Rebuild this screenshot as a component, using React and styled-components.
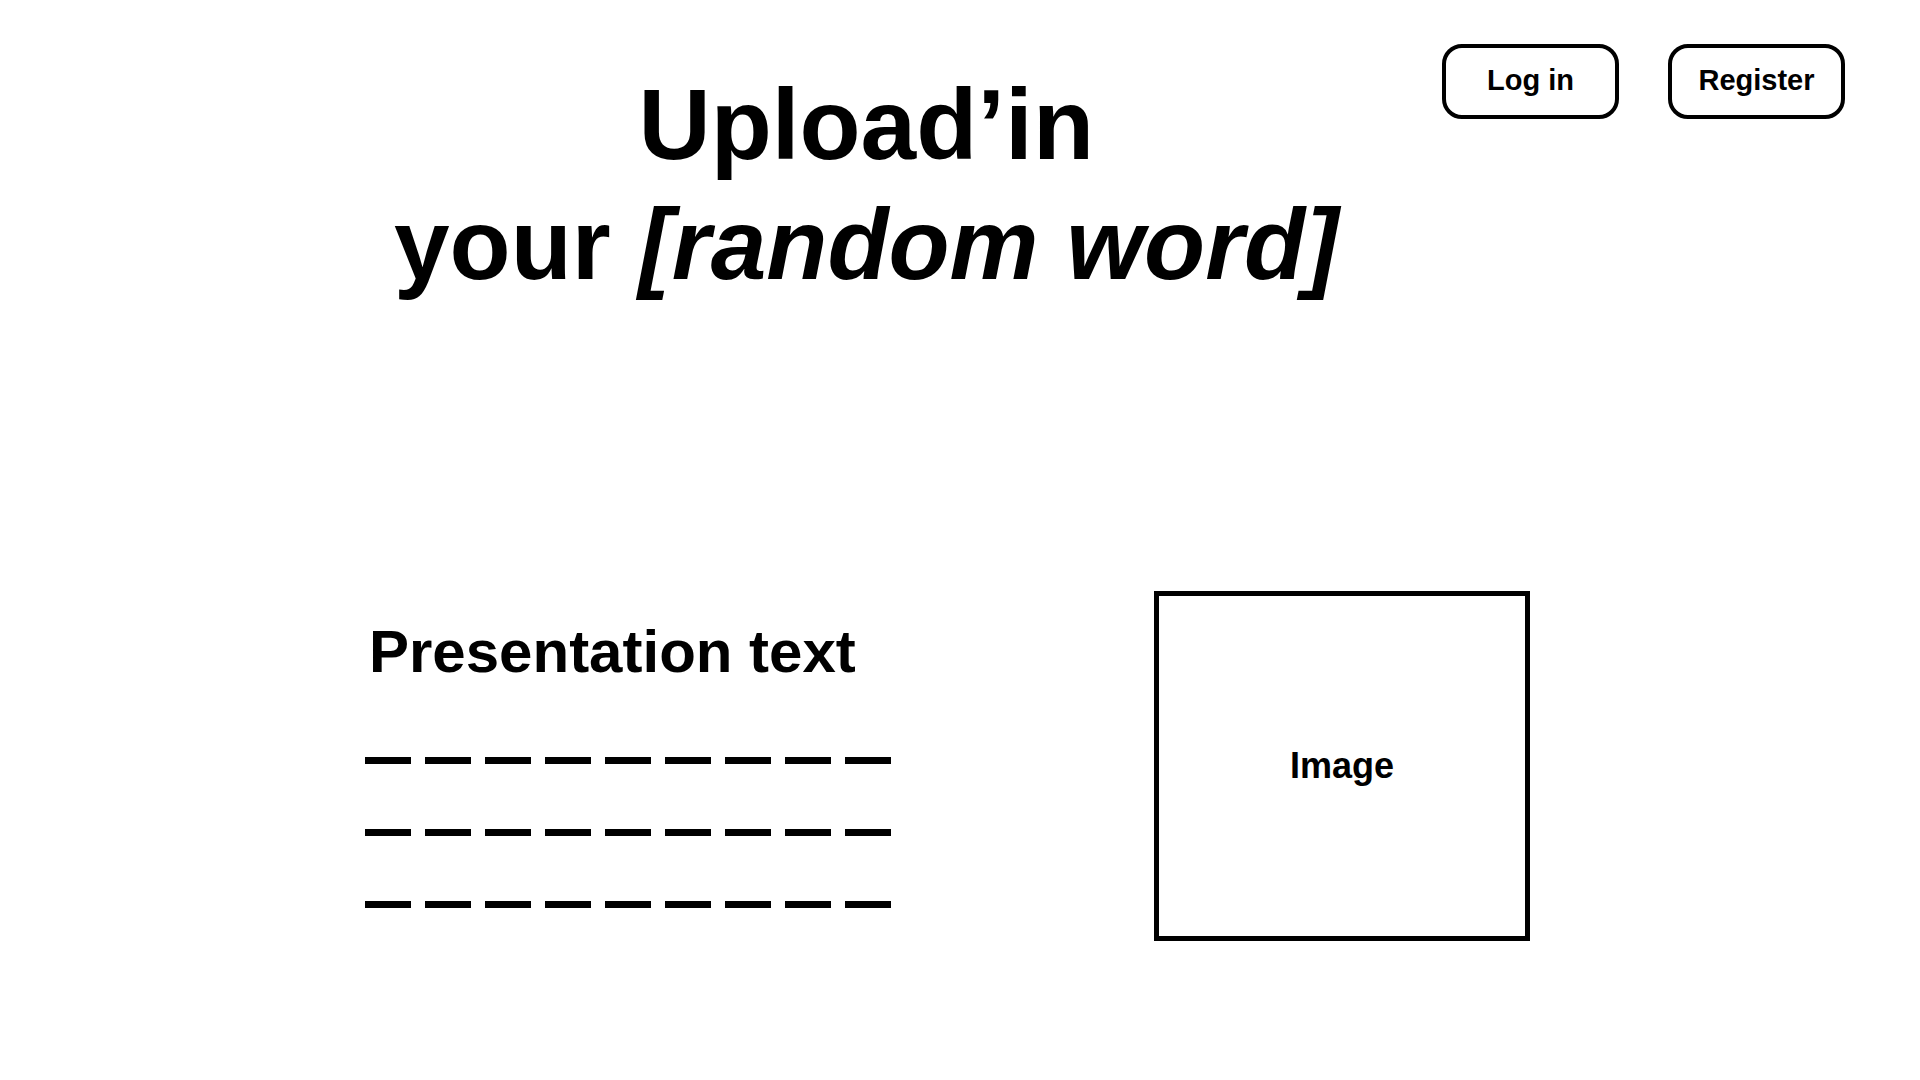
import styled, {createGlobalStyle} from "styled-components";

const GlobalStyle = createGlobalStyle`
  * {
    margin: 0;
    padding: 0;
    box-sizing: border-box;
  }
  body {
    background: #ffffff;
    color: #000000;
    font-family: "Liberation Sans", Helvetica, Arial, sans-serif;
  }
`

const Page = styled.div`
  width: 1920px;
  min-height: 1080px;
  background: #ffffff;
`

const Header = styled.header`
  display: flex;
  align-items: flex-start;
  padding: 44px 75px 0 394px;
`

const Title = styled.h1`
  margin-top: 20px;
  font-size: 100px;
  line-height: 120px;
  font-weight: 700;
  text-align: center;
  white-space: nowrap;

  em {
    font-style: italic;
  }
`

const Nav = styled.nav`
  display: flex;
  gap: 49px;
  margin-left: auto;
`

const NavButton = styled.button`
  width: 177px;
  height: 75px;
  display: flex;
  align-items: center;
  justify-content: center;
  padding-bottom: 2px;
  border: 4px solid #000;
  border-radius: 20px;
  background: #fff;
  color: #000;
  font-family: inherit;
  font-size: 29px;
  font-weight: 700;
  cursor: pointer;
`

const Section = styled.section`
  display: flex;
  align-items: flex-start;
  gap: 263px;
  padding: 287px 0 0 365px;
`

const TextColumn = styled.div`
  width: 526px;
  margin-top: 25px;
  display: flex;
  flex-direction: column;
`

const Heading = styled.h2`
  padding-left: 4px;
  font-size: 60px;
  line-height: 72px;
  font-weight: 700;
  margin-bottom: 69px;
`

const Lines = styled.div`
  display: flex;
  flex-direction: column;
  gap: 65px;
`

const DashLine = styled.div`
  width: 526px;
  height: 7px;
  background: repeating-linear-gradient(90deg, #000 0 46px, transparent 46px 60px);
`

const ImageBox = styled.div`
  width: 376px;
  height: 350px;
  border: 5px solid #000;
  display: flex;
  align-items: center;
  justify-content: center;
  font-size: 36px;
  font-weight: 700;
`

export default function App() {
    return (
        <>
            <GlobalStyle/>
            <Page>
                <Header>
                    <Title>
                        Upload’in<br/>
                        your <em>[random word]</em>
                    </Title>
                    <Nav>
                        <NavButton>Log in</NavButton>
                        <NavButton>Register</NavButton>
                    </Nav>
                </Header>
                <Section>
                    <TextColumn>
                        <Heading>Presentation text</Heading>
                        <Lines>
                            {[0, 1, 2].map(i => <DashLine key={i}/>)}
                        </Lines>
                    </TextColumn>
                    <ImageBox>Image</ImageBox>
                </Section>
            </Page>
        </>
    )
}
